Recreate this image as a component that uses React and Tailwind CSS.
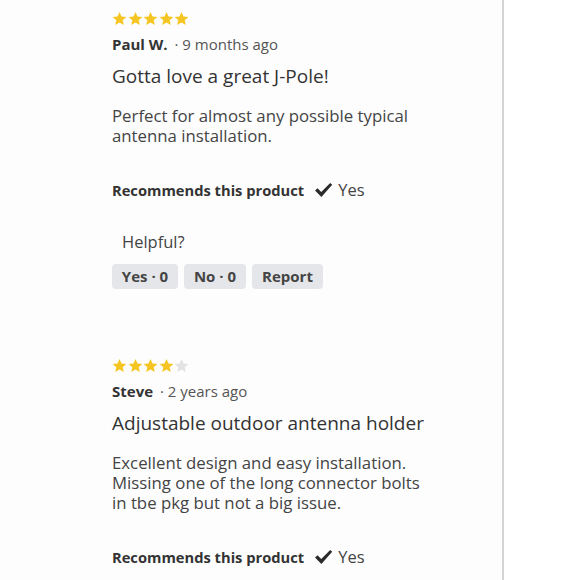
import React from "react";

function Star({ filled }) {
  return (
    <svg width="15" height="15" viewBox="0 0 24 24" className="block">
      <path
        d="M12 1.5l3.2 7.2 7.8.7-5.9 5.2 1.8 7.7L12 18.3l-6.9 4 1.8-7.7L1 9.4l7.8-.7z"
        fill={filled ? "#f5c623" : "#e3e3e3"}
      />
    </svg>
  );
}

function Stars({ n }) {
  return (
    <div className="flex gap-[0.5px]">
      {[0, 1, 2, 3, 4].map((i) => (
        <Star key={i} filled={i < n} />
      ))}
    </div>
  );
}

function Check() {
  return (
    <svg width="19" height="16" viewBox="0 0 19 16" className="block">
      <path d="M1 8.5l2.6-2.2 3.6 3.8L16.2 1l2 1.8L7.4 15z" fill="#2b2b2b" />
    </svg>
  );
}

function Recommends() {
  return (
    <div className="flex items-center text-[14.7px] leading-[22px]">
      <span className="font-bold text-[#333]">Recommends this product</span>
      <span className="ml-[10px] mr-[5px]">
        <Check />
      </span>
      <span className="text-[#444] text-[16.5px]">Yes</span>
    </div>
  );
}

function Review({ stars, name, date, title, body, helpful }) {
  return (
    <div className="flex flex-col">
      <Stars n={stars} />
      <div className="mt-[7px] text-[15px] leading-[22px]">
        <span className="font-bold text-[#333]">{name}</span>
        <span className="ml-[3px] text-[#555]"> · {date}</span>
      </div>
      <div className="mt-[8px] text-[19px] leading-[26px] text-[#333]">{title}</div>
      <div className="mt-[17px] text-[16.8px] leading-[20px] text-[#444]">{body}</div>
      <div className="mt-[33px]">
        <Recommends />
      </div>
      {helpful && (
        <div className="mt-[30px] flex flex-col">
          <div className="pl-[10px] text-[16.5px] leading-[22px] text-[#444]">Helpful?</div>
          <div className="mt-[11px] flex gap-[6px]">
            <span className="w-[66px] h-[25px] rounded-[4px] bg-[#e4e6e9] flex items-center justify-center text-[15px] font-bold text-[#444]">
              Yes · 0
            </span>
            <span className="w-[62px] h-[25px] rounded-[4px] bg-[#e4e6e9] flex items-center justify-center text-[15px] font-bold text-[#444]">
              No · 0
            </span>
            <span className="w-[71px] h-[25px] rounded-[4px] bg-[#e4e6e9] flex items-center justify-center text-[15px] font-bold text-[#444]">
              Report
            </span>
          </div>
        </div>
      )}
    </div>
  );
}

export default function App() {
  return (
    <div
      className="w-[580px] h-[580px] overflow-hidden bg-white flex"
      style={{ fontFamily: '"Open Sans", sans-serif' }}
    >
      <div className="w-[502px] bg-[#fdfdfd] pl-[112px] pt-[11px] flex flex-col">
        <Review
          stars={5}
          name="Paul W."
          date="9 months ago"
          title="Gotta love a great J-Pole!"
          body={<>Perfect for almost any possible typical<br />antenna installation.</>}
          helpful
        />
        <div className="mt-[69px]">
          <Review
            stars={4}
            name="Steve"
            date="2 years ago"
            title="Adjustable outdoor antenna holder"
            body={<>Excellent design and easy installation.<br />Missing one of the long connector bolts<br />in tbe pkg but not a big issue.</>}
          />
        </div>
      </div>
      <div className="w-[2px] bg-[#d4d4d4]" />
      <div className="flex-1 bg-white" />
    </div>
  );
}
